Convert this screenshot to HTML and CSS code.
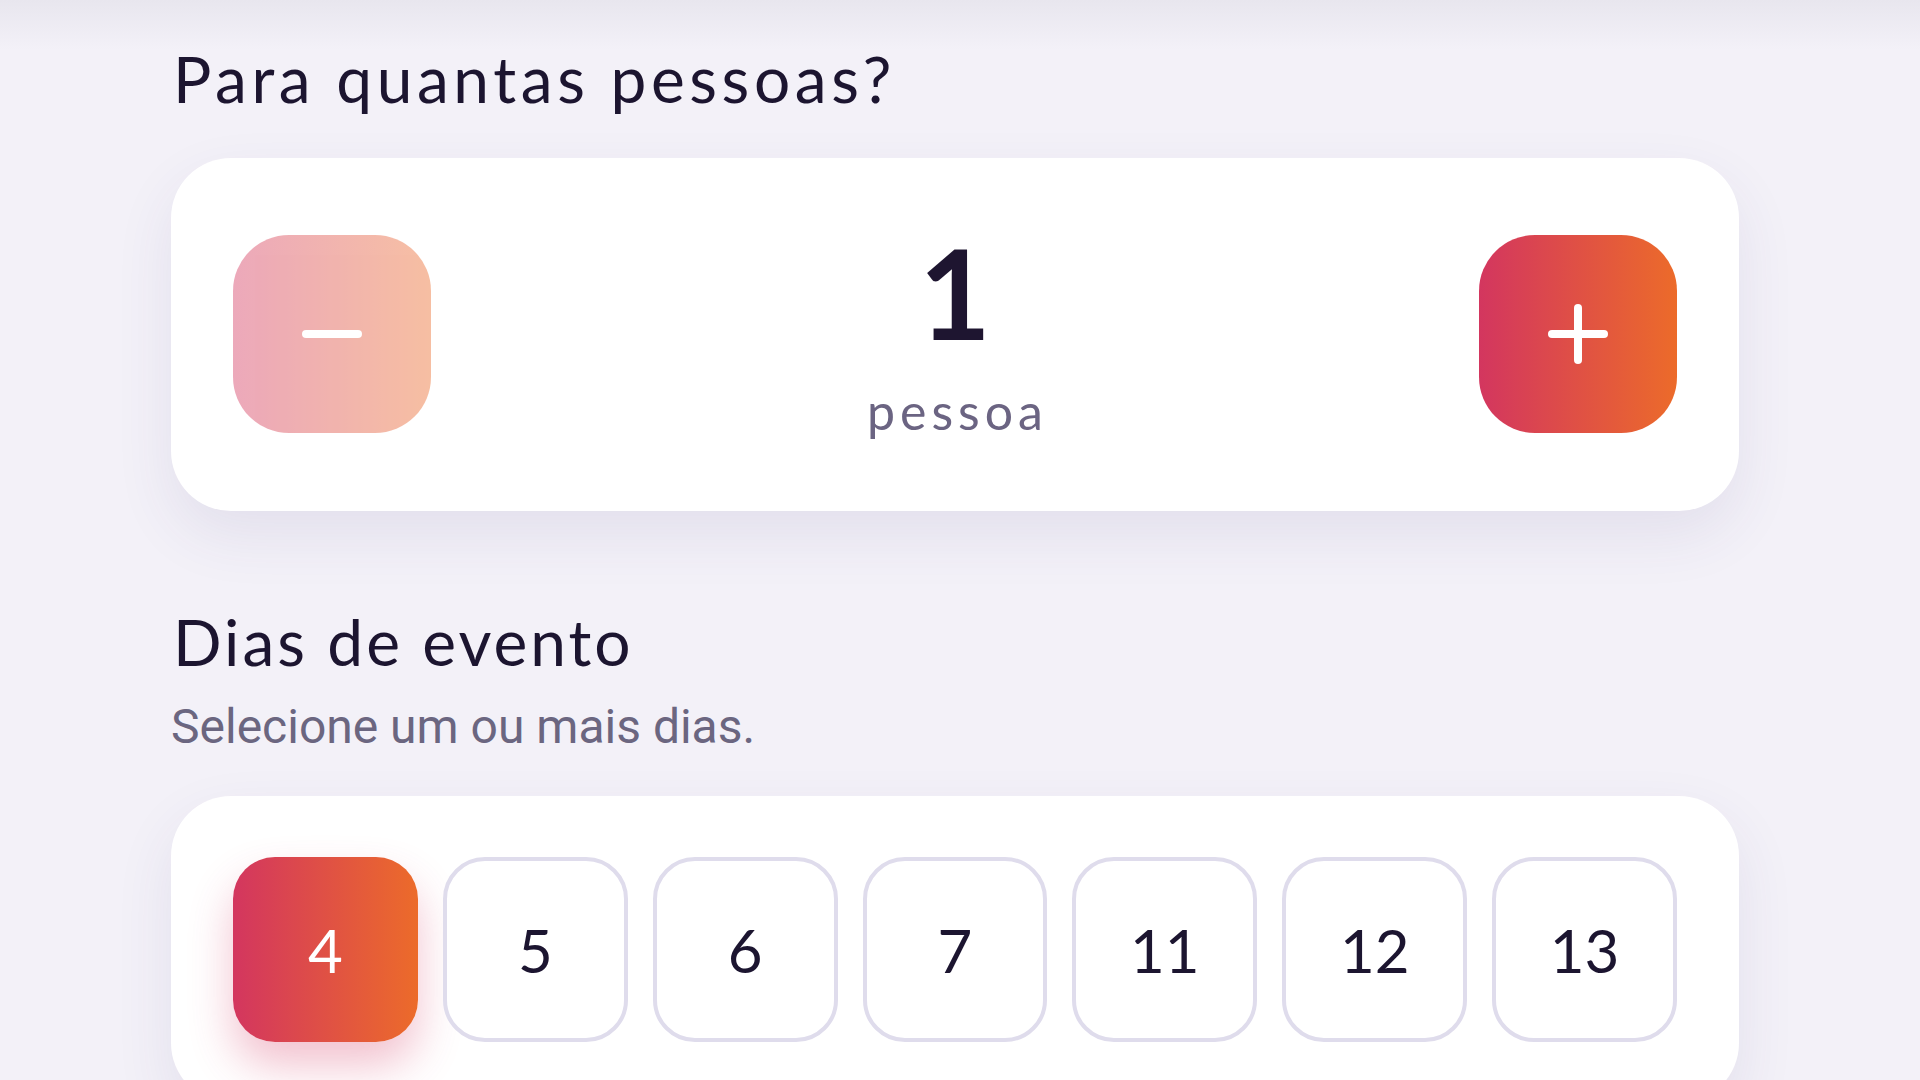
FILE: index.html
```html
<!DOCTYPE html>
<html lang="pt">
<head>
    <meta charset="UTF-8">
    <meta name="viewport" content="width=device-width, initial-scale=1.0">
    <title>Ingressos</title>
    <link rel="stylesheet" href="styles.css">
</head>
<body>

<div class="page">

    <h2 class="section-title">Para quantas pessoas?</h2>

    <div class="card counter">
        <button class="step-btn minus" aria-label="Menos">
            <svg width="60" height="60" viewBox="0 0 60 60"><line x1="4" y1="30" x2="56" y2="30" stroke="#fff" stroke-width="8" stroke-linecap="round"/></svg>
        </button>
        <div class="count">
            <span class="count-value">1</span>
            <span class="count-label">pessoa</span>
        </div>
        <button class="step-btn plus" aria-label="Mais">
            <svg width="60" height="60" viewBox="0 0 60 60"><line x1="4" y1="30" x2="56" y2="30" stroke="#fff" stroke-width="8" stroke-linecap="round"/><line x1="30" y1="4" x2="30" y2="56" stroke="#fff" stroke-width="8" stroke-linecap="round"/></svg>
        </button>
    </div>

    <h2 class="section-title second">Dias de evento</h2>
    <p class="section-sub">Selecione um ou mais dias.</p>

    <div class="card days">
        <button class="day active">4</button>
        <button class="day">5</button>
        <button class="day">6</button>
        <button class="day">7</button>
        <button class="day">11</button>
        <button class="day">12</button>
        <button class="day">13</button>
    </div>

</div>

</body>
</html>
```

FILE: styles.css
```css
/* page */
body {
    margin: 0;
    background: linear-gradient(to bottom, #e8e6ee 0, #f3f1f8 50px) #f3f1f8;
    color: #1c1530;
    font-family: "Lato", "Noto Sans", sans-serif;
}

.page {
    width: 1568px;
    margin-left: 171px;
    padding-top: 41px;
    padding-bottom: 60px;
}

/* headings */
.section-title {
    margin: 0;
    font-size: 64px;
    font-weight: 400;
    line-height: 1.2;
    letter-spacing: 4.6px;
    padding-left: 2px;
}

.section-title.second {
    margin-top: 93px;
    letter-spacing: 3px;
}

.section-sub {
    margin: 17px 0 0;
    font-family: "Roboto", sans-serif;
    font-size: 48px;
    line-height: 1.2;
    color: #6b6680;
}

/* cards */
.card {
    background: #fff;
    border-radius: 60px;
    box-shadow: 0 24px 60px rgba(70, 50, 120, 0.09);
}

.counter {
    margin-top: 40px;
    padding: 75px 62px;
    display: flex;
    align-items: center;
    justify-content: space-between;
}

.step-btn {
    width: 198px;
    height: 198px;
    border: none;
    border-radius: 56px;
    padding: 0;
    display: flex;
    align-items: center;
    justify-content: center;
    background: linear-gradient(to right, #d3365f, #ec6b2a);
    cursor: pointer;
}

.step-btn.minus {
    opacity: 0.43;
}

.count {
    display: flex;
    flex-direction: column;
    align-items: center;
}

.count-value {
    font-size: 124px;
    font-weight: 700;
    line-height: 110px;
    padding-top: 4px;
    color: #1e1530;
}

.count-label {
    margin-top: 39px;
    font-size: 50px;
    line-height: 50px;
    letter-spacing: 5px;
    padding-left: 5px;
    color: #6b6482;
}

/* day picker */
.days {
    margin-top: 41px;
    padding: 61px 62px;
    display: flex;
    gap: 25px;
}

.day {
    flex: 1 1 0;
    min-width: 0;
    aspect-ratio: 1;
    box-sizing: border-box;
    border: 4px solid #dfdcec;
    border-radius: 42px;
    background: #fff;
    font-family: "Lato", sans-serif;
    font-size: 60px;
    color: #1c1530;
    padding: 0;
    cursor: pointer;
}

.day.active {
    border-color: transparent;
    color: #fff;
    background: linear-gradient(to right, #d3365f, #ec6b2a) border-box;
    box-shadow: 0 24px 44px rgba(211, 54, 95, 0.3);
}
```
